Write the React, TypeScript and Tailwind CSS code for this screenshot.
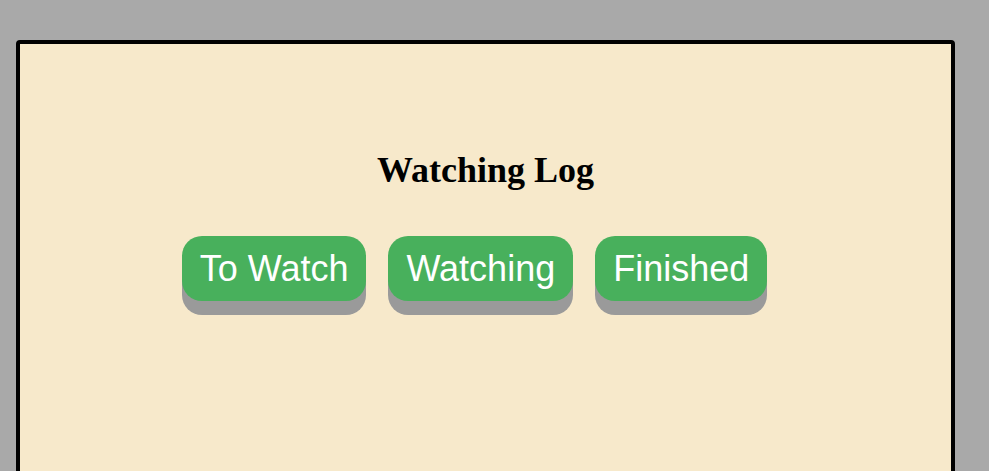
import React from "react";

export default function App() {
  const items = ["To Watch", "Watching", "Finished"];
  return (
    <div className="w-[989px] h-[471px] overflow-hidden bg-[#a9a9a9]">
      <div className="ml-[16px] mt-[40px] w-[939px] h-[500px] border-4 border-black rounded-[4px] bg-[#f7e9cb] pt-[106px]">
        <h1
          className="text-center text-[36px] font-bold leading-[41px] text-black"
          style={{ fontFamily: '"Liberation Serif", "Times New Roman", serif' }}
        >
          Watching Log
        </h1>
        <div className="mt-[45px] flex justify-center gap-[22px] pr-[22px]">
          {items.map((t) => (
            <button
              key={t}
              className="bg-[#48b05c] text-white text-[36px] leading-[41px] py-3 px-[18px] rounded-[20px] shadow-[0_14px_0_#9a9a9a]"
              style={{ fontFamily: '"Liberation Sans", Arial, sans-serif' }}
            >
              {t}
            </button>
          ))}
        </div>
      </div>
    </div>
  );
}
